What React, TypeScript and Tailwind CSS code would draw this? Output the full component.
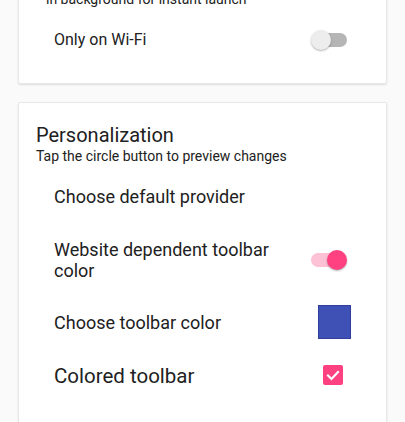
import React from "react";

function Switch({ on }: { on: boolean }) {
  return (
    <div className="relative w-[36px] h-[20px] shrink-0">
      {on ? (
        <>
          <div className="absolute left-0 top-[3px] w-[34px] h-[14px] rounded-full bg-[#fdc1d5]" />
          <div className="absolute left-[16px] top-0 w-[20px] h-[20px] rounded-full bg-[#ff4081] shadow-[0_1px_2px_rgba(0,0,0,0.3)]" />
        </>
      ) : (
        <>
          <div className="absolute left-[2px] top-[3px] w-[34px] h-[14px] rounded-full bg-[#b5b5b5]" />
          <div className="absolute left-0 top-0 w-[20px] h-[20px] rounded-full bg-[#ededed] shadow-[0_1px_2px_rgba(0,0,0,0.3)]" />
        </>
      )}
    </div>
  );
}

export default function App() {
  return (
    <div
      className="min-h-[422px] bg-[#fafafa] px-[18px] overflow-hidden text-[#212121]"
      style={{ fontFamily: "Roboto, 'Noto Sans', 'Liberation Sans', sans-serif", height: 422 }}
    >
      {/* Card 1 (cut off at top) */}
      <div className="-mt-[28px] bg-white rounded-[2px] border border-[#e8e8e8] shadow-[0_1px_2px_rgba(0,0,0,0.12)] pt-[17px] pb-[11px]">
        <p className="pl-[27px] text-[14px] leading-[18px]">in background for instant launch</p>
        <div className="flex items-center h-[64px] pl-[35px] pr-[39px]">
          <span className="flex-1 text-[16px] leading-[20px]">Only on Wi-Fi</span>
          <Switch on={false} />
        </div>
      </div>

      {/* Card 2 */}
      <div className="mt-[18px] bg-white rounded-[2px] border border-[#e8e8e8] shadow-[0_1px_2px_rgba(0,0,0,0.12)] pt-[20px] pb-[40px]">
        <div className="pl-[17px]">
          <h2 className="text-[20px] leading-[24px] font-normal">Personalization</h2>
          <p className="text-[14px] leading-[18px]">Tap the circle button to preview changes</p>
        </div>

        <div className="flex items-center h-[64px] pl-[35px] pr-[35px]">
          <span className="text-[18px] leading-[22px]">Choose default provider</span>
        </div>

        <div className="flex items-center h-[62px] pl-[35px] pr-[39px]">
          <span className="w-[240px] text-[18px] leading-[21.5px]">Website dependent toolbar color</span>
          <div className="flex-1" />
          <Switch on={true} />
        </div>

        <div className="flex items-center h-[64px] pl-[35px] pr-[35px]">
          <span className="flex-1 text-[18px] leading-[22px]">Choose toolbar color</span>
          <div className="w-[33px] h-[34px] bg-[#3f51b5] border border-[#2f3f9f] -mt-[2px]" />
        </div>

        <div className="flex items-center h-[42px] pl-[35px] pr-[43px]">
          <span className="flex-1 text-[20.5px] leading-[24px]">Colored toolbar</span>
          <div className="w-[20px] h-[20px] rounded-[2px] bg-[#ff4081] flex items-center justify-center -mt-[2px]">
            <svg width="14" height="14" viewBox="0 0 14 14" fill="none">
              <polyline points="2,7.5 5.5,11 12,4" stroke="white" strokeWidth="2.2" strokeLinecap="square" />
            </svg>
          </div>
        </div>
      </div>
    </div>
  );
}
